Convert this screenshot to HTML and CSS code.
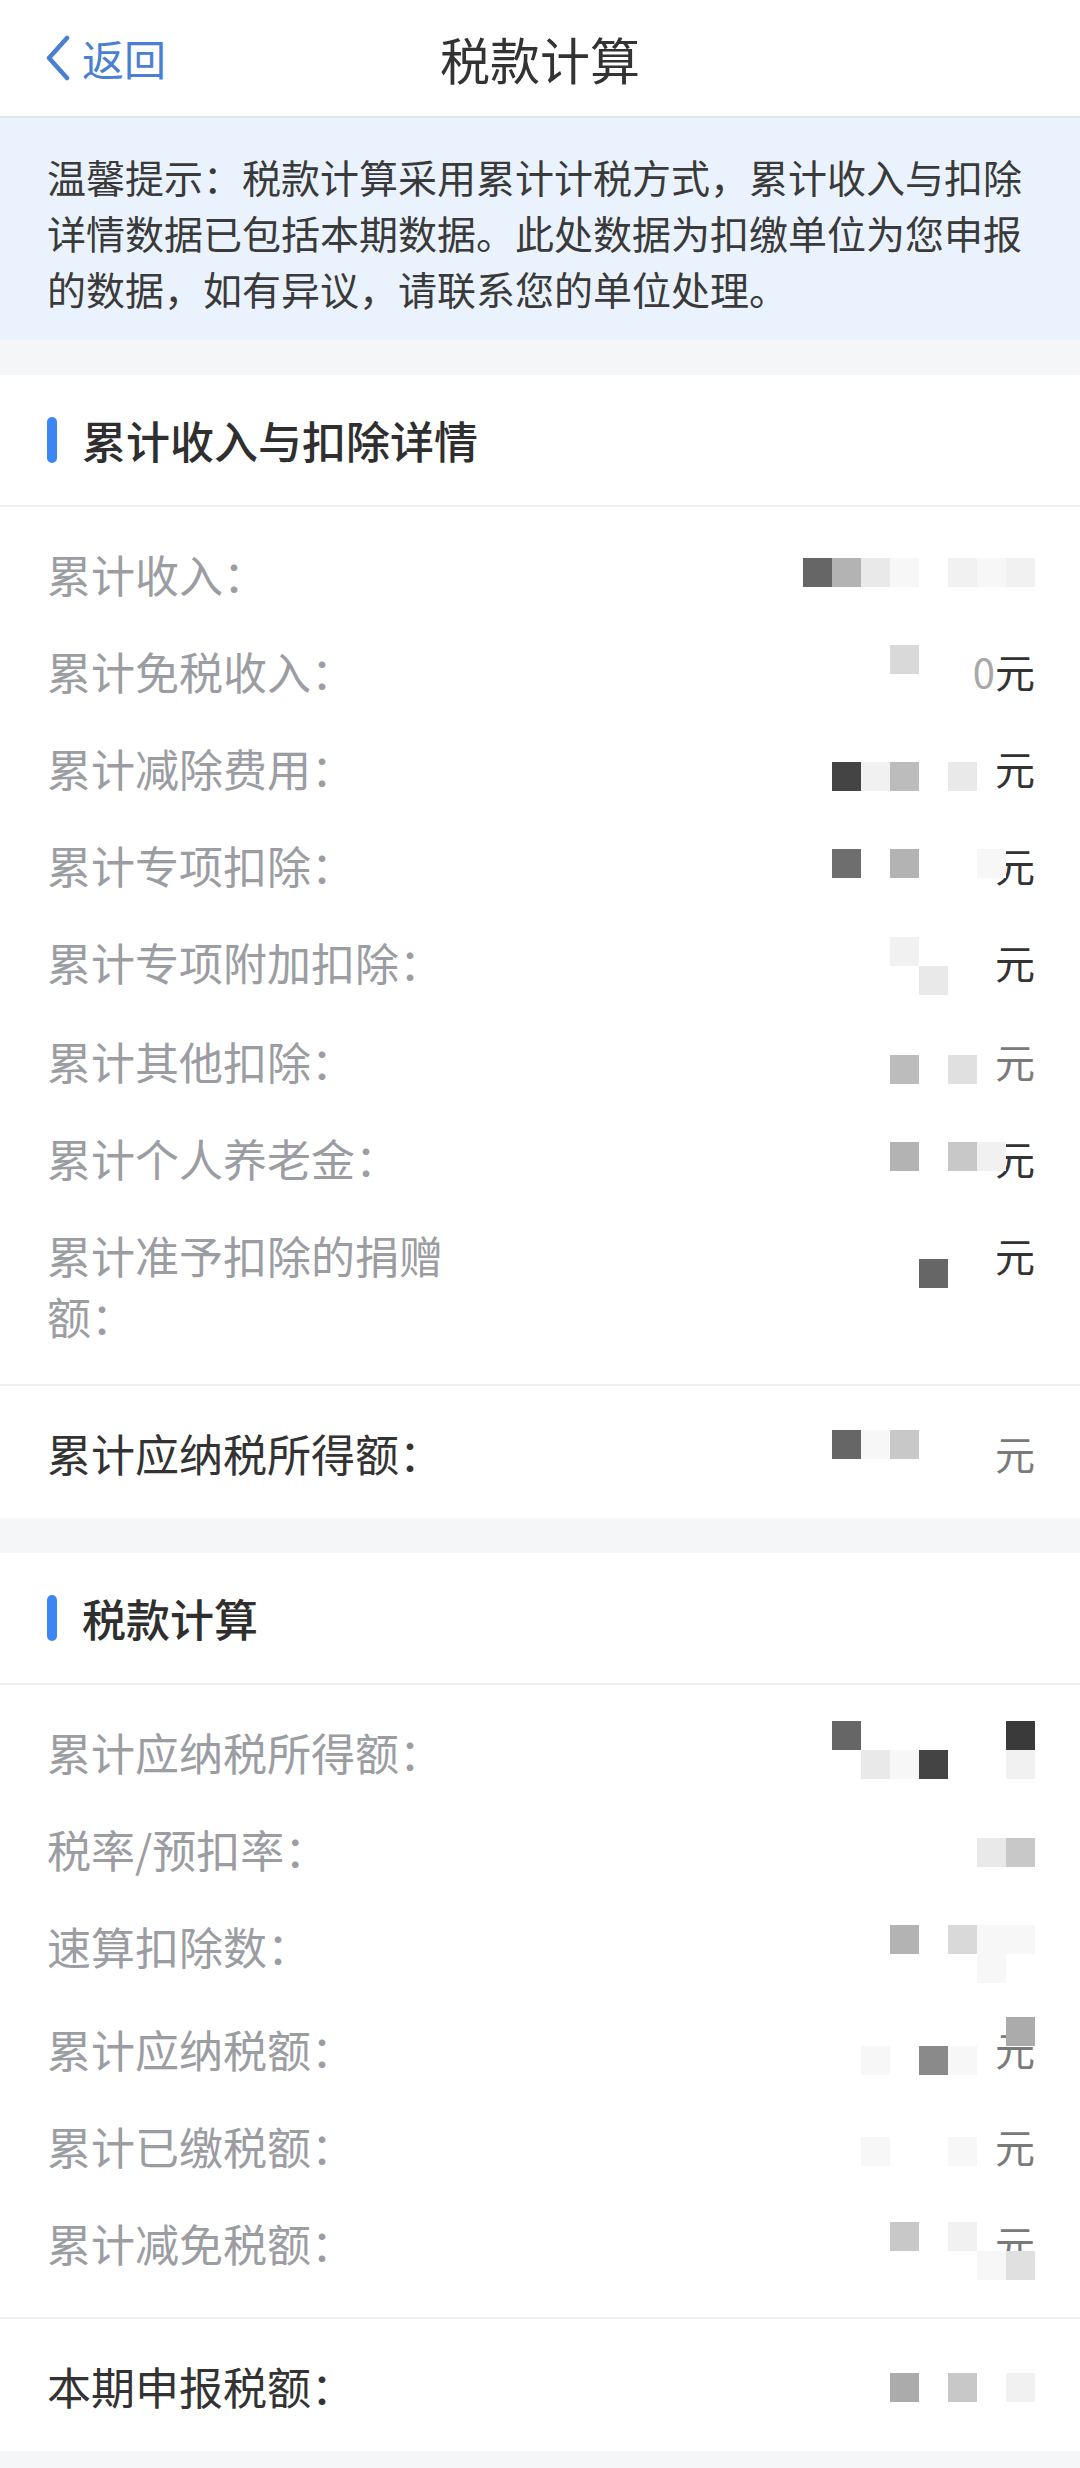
FILE: index.html
```html
<!DOCTYPE html>
<html lang="zh-CN">
<head>
<meta charset="utf-8">
<title>税款计算</title>
<link rel="stylesheet" href="styles.css">
</head>
<body>
<header class="nav">
  <div class="back">
    <svg class="chev" width="26" height="46" viewBox="0 0 26 46"><polyline points="22,3 4,23 22,43" fill="none" stroke="#4a80d2" stroke-width="4.5" stroke-linecap="round" stroke-linejoin="round"/></svg>
    <span>返回</span>
  </div>
  <div class="title">税款计算</div>
  <div></div>
</header>

<div class="notice">温馨提示：税款计算采用累计计税方式，累计收入与扣除详情数据已包括本期数据。此处数据为扣缴单位为您申报的数据，如有异议，请联系您的单位处理。</div>

<section class="card">
  <div class="card-hd"><span class="bar"></span><span>累计收入与扣除详情</span></div>
  <div class="list">
    <div class="row">
      <span class="lbl">累计收入：</span>
      <div class="val">
        <div class="mz o14"><i class="k3"></i><i class="k7"></i><i class="k12"></i><i class="k14"></i><i></i><i class="k13"></i><i class="k14"></i><i class="k13"></i></div>
      </div>
    </div>
    <div class="row">
      <span class="lbl">累计免税收入：</span>
      <div class="val">
        <span class="yuan"><span class="z">0</span>元</span>
        <div class="mz o4"><i></i><i></i><i></i><i class="k10"></i><i></i><i></i><i></i><i></i></div>
      </div>
    </div>
    <div class="row">
      <span class="lbl">累计减除费用：</span>
      <div class="val">
        <span class="yuan">元</span>
        <div class="mz o24"><i></i><i class="k2"></i><i class="k13"></i><i class="k8"></i><i></i><i class="k12"></i><i></i><i></i></div>
      </div>
    </div>
    <div class="row">
      <span class="lbl">累计专项扣除：</span>
      <div class="val">
        <span class="yuan">元</span>
        <div class="mz o14"><i></i><i class="k4"></i><i></i><i class="k7"></i><i></i><i></i><i class="k14"></i><i></i></div>
      </div>
    </div>
    <div class="row">
      <span class="lbl">累计专项附加扣除：</span>
      <div class="val">
        <span class="yuan">元</span>
        <div class="mz o5"><i></i><i></i><i></i><i class="k13"></i><i></i><i></i><i></i><i></i><i></i><i></i><i></i><i></i><i class="k12"></i><i></i><i></i><i></i></div>
      </div>
    </div>
    <div class="row">
      <span class="lbl">累计其他扣除：</span>
      <div class="val">
        <span class="yuan fade">元</span>
        <div class="mz o24"><i></i><i></i><i></i><i class="k8"></i><i></i><i class="k11"></i><i></i><i></i></div>
      </div>
    </div>
    <div class="row">
      <span class="lbl">累计个人养老金：</span>
      <div class="val">
        <span class="yuan">元</span>
        <div class="mz o14"><i></i><i></i><i></i><i class="k7"></i><i></i><i class="k9"></i><i class="k13"></i><i></i></div>
      </div>
    </div>
    <div class="row">
      <span class="lbl wrap">累计准予扣除的捐赠额：</span>
      <div class="val">
        <span class="yuan">元</span>
        <div class="mz o34"><i></i><i></i><i></i><i></i><i class="k3"></i><i></i><i></i><i></i></div>
      </div>
    </div>
  </div>
  <div class="row total">
    <span class="lbl">累计应纳税所得额：</span>
    <div class="val">
      <span class="yuan fade">元</span>
      <div class="mz o7"><i></i><i class="k3"></i><i class="k14"></i><i class="k9"></i><i></i><i></i><i></i><i></i></div>
    </div>
  </div>
</section>

<section class="card">
  <div class="card-hd"><span class="bar"></span><span>税款计算</span></div>
  <div class="list">
    <div class="row">
      <span class="lbl">累计应纳税所得额：</span>
      <div class="val">
        <div class="mz on1"><i></i><i class="k3"></i><i></i><i></i><i></i><i></i><i></i><i class="k1"></i><i></i><i></i><i class="k12"></i><i class="k14"></i><i class="k2"></i><i></i><i></i><i class="k13"></i></div>
      </div>
    </div>
    <div class="row">
      <span class="lbl">税率/预扣率：</span>
      <div class="val">
        <div class="mz o19"><i></i><i></i><i></i><i></i><i></i><i></i><i class="k12"></i><i class="k9"></i></div>
      </div>
    </div>
    <div class="row">
      <span class="lbl">速算扣除数：</span>
      <div class="val">
        <div class="mz o9"><i></i><i></i><i></i><i class="k7"></i><i></i><i class="k10"></i><i class="k14"></i><i class="k14"></i><i></i><i></i><i></i><i></i><i></i><i></i><i class="k14"></i><i></i></div>
      </div>
    </div>
    <div class="row">
      <span class="lbl">累计应纳税额：</span>
      <div class="val">
        <span class="yuan fade">元</span>
        <div class="mz on2"><i></i><i></i><i></i><i></i><i></i><i></i><i></i><i class="k6"></i><i></i><i></i><i class="k14"></i><i></i><i class="k5"></i><i class="k14"></i><i></i><i></i></div>
      </div>
    </div>
    <div class="row">
      <span class="lbl">累计已缴税额：</span>
      <div class="val">
        <span class="yuan fade">元</span>
        <div class="mz o21"><i></i><i></i><i class="k14"></i><i></i><i></i><i class="k14"></i><i></i><i></i></div>
      </div>
    </div>
    <div class="row">
      <span class="lbl">累计减免税额：</span>
      <div class="val">
        <span class="yuan fade">元</span>
        <div class="mz o9"><i></i><i></i><i></i><i class="k9"></i><i></i><i class="k13"></i><i></i><i></i><i></i><i></i><i></i><i></i><i></i><i></i><i class="k14"></i><i class="k11"></i></div>
      </div>
    </div>
  </div>
  <div class="row total">
    <span class="lbl">本期申报税额：</span>
    <div class="val">
      <div class="mz o17"><i></i><i></i><i></i><i class="k6"></i><i></i><i class="k9"></i><i></i><i class="k13"></i></div>
    </div>
  </div>
</section>
</body>
</html>
```

FILE: styles.css
```css
* {
  box-sizing: border-box;
  margin: 0;
  padding: 0;
}

html,
body {
  background: #f5f6f8;
}

body {
  width: 1080px;
  min-height: 2468px;
  font-family: "Noto Sans CJK SC", "Noto Sans", sans-serif;
  color: #333;
}

.nav {
  height: 118px;
  background: #fff;
  border-bottom: 2px solid #e4e5e7;
  display: grid;
  grid-template-columns: 1fr auto 1fr;
  align-items: center;
}

.back {
  display: flex;
  align-items: center;
  gap: 11px;
  padding-left: 45px;
  color: #4a80d2;
  font-size: 42px;
  line-height: 1;
}

.chev {
  display: block;
}

.title {
  font-size: 50px;
  line-height: 1;
  color: #333;
}

.notice {
  background: #eaf3fd;
  padding: 30px 47px 24px;
  font-size: 39px;
  line-height: 56px;
  color: #3a3a3a;
}

.card {
  background: #fff;
  margin-top: 35px;
}

.card-hd {
  height: 132px;
  border-bottom: 2px solid #eeeff1;
  display: flex;
  align-items: center;
  gap: 25px;
  padding-left: 47px;
  font-size: 44px;
  font-weight: 500;
  color: #2f2f2f;
}

.bar {
  width: 10px;
  height: 46px;
  border-radius: 5px;
  background: #3b86f2;
}

.list {
  padding: 19px 0 19px;
  border-bottom: 2px solid #eeeff1;
}

.row {
  display: flex;
  justify-content: space-between;
  align-items: flex-start;
  padding: 18px 45px 18px 47px;
}

.row.total {
  padding-top: 37px;
  padding-bottom: 34px;
}

.lbl {
  font-size: 44px;
  line-height: 61px;
  color: #9b9da2;
}

.lbl.wrap {
  max-width: 420px;
}

.row.total .lbl {
  color: #333;
}

.val {
  display: grid;
  width: 232px;
}

.val > * {
  grid-area: 1 / 1;
}

.yuan {
  justify-self: end;
  align-self: start;
  font-size: 40px;
  line-height: 61px;
  color: #333;
}

.yuan.fade {
  color: #7a7a7a;
}

.z {
  color: #a8a8a8;
}

.mz {
  display: grid;
  grid-template-columns: repeat(8, 29px);
  grid-auto-rows: 29px;
  align-self: start;
}

.mz i {
  display: block;
}

.on2 { margin-top: -2px; }
.on1 { margin-top: -1px; }
.o4 { margin-top: 4px; }
.o5 { margin-top: 5px; }
.o7 { margin-top: 7px; }
.o9 { margin-top: 9px; }
.o14 { margin-top: 14px; }
.o17 { margin-top: 17px; }
.o19 { margin-top: 19px; }
.o21 { margin-top: 21px; }
.o24 { margin-top: 24px; }
.o34 { margin-top: 34px; }

.k1 { background: #3a3a3a; }
.k2 { background: #444; }
.k3 { background: #666; }
.k4 { background: #6e6e6e; }
.k5 { background: #8a8a8a; }
.k6 { background: #ababab; }
.k7 { background: #b3b3b3; }
.k8 { background: #bcbcbc; }
.k9 { background: #c8c8c8; }
.k10 { background: #d9d9d9; }
.k11 { background: #e0e0e0; }
.k12 { background: #e9e9e9; }
.k13 { background: #f1f1f1; }
.k14 { background: #f7f7f7; }
```
